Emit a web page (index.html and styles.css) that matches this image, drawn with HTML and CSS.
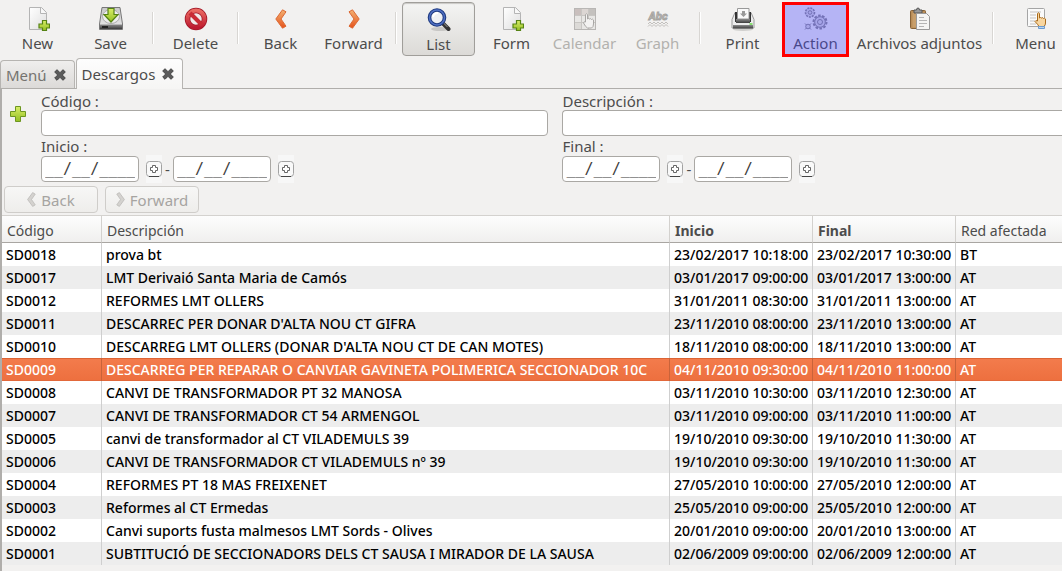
FILE: index.html
```html
<!DOCTYPE html>
<html lang="es">
<head>
<meta charset="utf-8">
<title>Descargos</title>
<link rel="stylesheet" href="styles.css">
</head>
<body>
<svg class="defs" aria-hidden="true">
  <defs>
    <linearGradient id="green" x1="0" y1="0" x2="0" y2="1"><stop offset="0" stop-color="#d9ee68"/><stop offset="1" stop-color="#94bf22"/></linearGradient>
    <linearGradient id="orange" x1="0" y1="0" x2="0" y2="1"><stop offset="0" stop-color="#f3b273"/><stop offset="1" stop-color="#e5521b"/></linearGradient>
    <linearGradient id="steel" x1="0" y1="0" x2="0" y2="1"><stop offset="0" stop-color="#c9c9c9"/><stop offset="1" stop-color="#e9e9e9"/></linearGradient>
    <linearGradient id="dark" x1="0" y1="0" x2="0" y2="1"><stop offset="0" stop-color="#8c8c8c"/><stop offset="1" stop-color="#3c3c3c"/></linearGradient>
    <linearGradient id="red" x1="0" y1="0" x2="0" y2="1"><stop offset="0" stop-color="#ea6a62"/><stop offset="1" stop-color="#bd1a30"/></linearGradient>
    <linearGradient id="paper" x1="0" y1="0" x2="1" y2="1"><stop offset="0" stop-color="#fff"/><stop offset="1" stop-color="#dedede"/></linearGradient>
    <symbol id="i-new" viewBox="0 0 24 24">
      <path d="M3.5.5h12l5 5v17h-17z" fill="url(#paper)" stroke="#b4b4b4"/>
      <path d="M14.5 1v5.500h6" fill="#f8f8f8" stroke="#b4b4b4"/>
      <path d="M16.500 13.500h4v3.500h3v4h-3v2.500h-4v-2.500h-3.500v-4h3.500z" fill="url(#green)" stroke="#568314" stroke-width="1.200"/>
    </symbol>
    <symbol id="i-plus" viewBox="0 0 16 16"><path d="M5.500.500h5v5h5v5h-5v5h-5v-5h-5v-5h5z" fill="url(#green)" stroke="#6d9620"/></symbol>
    <symbol id="i-prev" viewBox="0 0 12 20"><path d="M7.500.800L11 2.800 6 10l5 7.200-3.500 2L.800 10z" stroke-linejoin="round"/></symbol>
    <symbol id="i-next" viewBox="0 0 12 20"><path d="M4.500.800L1 2.800 6 10l-5 7.200 3.500 2L11.200 10z" stroke-linejoin="round"/></symbol>
    <symbol id="i-close" viewBox="0 0 12 12"><path d="M3 .700L6 3.700 9 .700 11.300 3 8.300 6l3 3L9 11.300l-3-3-3 3L.700 9l3-3-3-3z" fill="#5b5b5b" stroke="#444" stroke-linejoin="round"/></symbol>
    <symbol id="i-pick" viewBox="0 0 16 16">
      <rect x=".5" y=".5" width="15" height="15" rx="3" fill="#f9f9f9" stroke="#a2a2a2"/>
      <path d="M3 15.500h10" stroke="#444"/>
      <path d="M6.500 4.500h3v2h2v3h-2v2h-3v-2h-2v-3h2z" fill="#fff" stroke="#666"/>
    </symbol>
  </defs>
</svg>

<nav class="toolbar" aria-label="Acciones">
  <button class="tool"><svg class="icon"><use href="#i-new"/></svg>New</button>
  <button class="tool"><svg class="icon" viewBox="0 0 24 24"><path d="M3 .500h18L23.500 17v5.500H.500V17z" fill="url(#steel)" stroke="#777"/><ellipse cx="12" cy="9.500" rx="8.500" ry="7" fill="#eee" stroke="#aaa"/><path d="M1 17.500h22V22H1z" fill="url(#dark)"/><path d="M3 20h6" stroke="#222" stroke-width="2"/><path d="M9 1.500h6v6h4l-7 7.500-7-7.500h4z" fill="url(#green)" stroke="#568314" stroke-width="1.200"/></svg>Save</button>
  <span class="sep"></span>
  <button class="tool"><svg class="icon" viewBox="0 0 24 24"><circle cx="12" cy="12" r="8.500" fill="#f1e9e8" stroke="#a01525" stroke-width="5.500"/><circle cx="12" cy="12" r="8.500" fill="none" stroke="url(#red)" stroke-width="4"/><path d="M6 6l12 12" stroke="#c92b35" stroke-width="4"/></svg>Delete</button>
  <span class="sep"></span>
  <button class="tool"><svg class="icon chevron"><use href="#i-prev"/></svg>Back</button>
  <button class="tool"><svg class="icon chevron"><use href="#i-next"/></svg>Forward</button>
  <span class="sep"></span>
  <button class="tool pressed" aria-pressed="true"><svg class="icon" viewBox="0 0 24 24"><ellipse cx="13" cy="21" rx="9" ry="2" fill="#c8c7c5"/><path d="M15.500 15l6 6" stroke="#333" stroke-width="4" stroke-linecap="round"/><path d="M16.500 15l4 4" stroke="#999" stroke-width="1"/><circle cx="10" cy="9.500" r="7.500" fill="#eef0f4" stroke="#1f3a80" stroke-width="3.600"/><circle cx="10" cy="9.500" r="7.500" fill="none" stroke="#4f70c4" stroke-width="1.500"/><path d="M6 9a5 5 0 0 1 5-4" fill="none" stroke="#fff" stroke-width="2"/></svg>List</button>
  <button class="tool"><svg class="icon"><use href="#i-new"/></svg>Form</button>
  <button class="tool" disabled><svg class="icon" viewBox="0 0 24 24"><rect x="1.500" y="1.500" width="21" height="21" fill="#e8e7e5" stroke="#b8b6b4"/><path d="M2 2h6v6H2z" fill="#c9bfbd"/><path d="M8 2h7v6H8z" fill="#dcd6d3"/><path d="M15 2h7v6h-7z" fill="#c4c1be"/><path d="M2 15h6v7H2z" fill="#dcdad7"/><path d="M8.500 2v20M15.500 2v20M2 8.500h20M2 15.500h20" stroke="#c8c6c3"/><path d="M12.500 14V7.500q1-1.500 2 0V12q1-1 2 0 1-1 2 .500 1-1 2 .500V17q0 3-2 4h-4q-2-1-4-5 .500-2 2-1z" fill="#f3f2f1" stroke="#a9a7a5"/></svg>Calendar</button>
  <button class="tool" disabled><svg class="icon" viewBox="0 0 24 24"><text x="12" y="13" text-anchor="middle" class="abc">Abc</text><path d="M2 17l2-2 2 2 2-2 2 2 2-2 2 2 2-2 2 2 2-2 2 2M2 19.500l2-2 2 2 2-2 2 2 2-2 2 2 2-2 2 2 2-2 2 2" fill="none" stroke="#c2c0bd"/></svg>Graph</button>
  <span class="sep"></span>
  <button class="tool"><svg class="icon" viewBox="0 0 24 24"><ellipse cx="12" cy="22.500" rx="10" ry="1.500" fill="#d0cfcd"/><path d="M4 5.500h16l3 7v8.500H1v-8.500z" fill="#ececec" stroke="#999"/><path d="M4 5h16v10H4z" fill="#333"/><path d="M6.500 1.500h11.500V12H6.500z" fill="#fafafa" stroke="#999"/><path d="M11 4h3v2.500h2L12.500 10 9 6.500h2z" fill="#999"/><path d="M5 12h14v4H5z" fill="url(#dark)"/><path d="M2 18h20v3.500H2z" fill="url(#dark)"/><path d="M18.500 17h3" stroke="#64d84a" stroke-width="1.500"/></svg>Print</button>
  <button class="tool marked"><svg class="icon" viewBox="0 0 24 24"><g fill="#dad9dc" stroke="#8c8b90"><circle cx="6" cy="5.500" r="4.500" stroke-width="1.600" stroke-dasharray="2 1"/><circle cx="6" cy="5.500" r="1.800"/><circle cx="16" cy="15" r="6.500" stroke-width="2" stroke-dasharray="2.500 1.500"/><circle cx="16" cy="15" r="5.300"/><circle cx="16" cy="15" r="2.500"/><circle cx="4" cy="19.500" r="2.300"/><path d="M1 16.500l1.500 1.500M7 16.500l-1.500 1.500M1 22.500L2.500 21M7 22.500L5.500 21"/></g></svg>Action</button>
  <button class="tool wide"><svg class="icon" viewBox="0 0 24 24"><rect x="2.500" y="3.500" width="15" height="18" rx="1" fill="#b98d58" stroke="#876237"/><path d="M4.500 5.500h11v15h-11z" fill="#c89f6b"/><path d="M6 6V3h2.500q0-2 1.500-2t1.500 2H14v3z" fill="#999" stroke="#555"/><path d="M8.500 6.500h10l3 3v13h-13z" fill="#f5f5f4" stroke="#999"/><path d="M11 10.500h5M11 13.500h8M11 16.500h8M11 19.500h5" stroke="#b5b5b5"/></svg>Archivos adjuntos</button>
  <span class="sep"></span>
  <button class="tool"><svg class="icon" viewBox="0 0 24 24"><rect x="3.500" y="1.500" width="17" height="18" rx="1" fill="#fafafa" stroke="#a5a5a5"/><path d="M6 5h11M6 8h6M6 11h6M6 14h5M6 17h6" stroke="#c3c3c3"/><path d="M13.500 14V6.500q1-1.500 2 0V11q1-1 2 0 1-1 2 .500 1-1 2 .500V16q0 2-1.500 3.500h-5q-1-2-4-5 .500-1.500 2.500-.500z" fill="#f8d6a0" stroke="#a86a1c"/><path d="M14.500 19.500h6v2h-6z" fill="#b9d4f0" stroke="#6b9bd0"/></svg>Menu</button>
</nav>

<div class="tabs" role="tablist">
  <div class="tab" role="tab">Menú<button class="close" aria-label="Cerrar Menú"><svg><use href="#i-close"/></svg></button></div>
  <div class="tab active" role="tab" aria-selected="true">Descargos<button class="close" aria-label="Cerrar Descargos"><svg><use href="#i-close"/></svg></button></div>
</div>

<main class="page">
  <form class="search">
    <button class="add" type="button" aria-label="Añadir filtro"><svg><use href="#i-plus"/></svg></button>
    <div class="fields">
      <label for="codigo">Código :</label>
      <input class="text" id="codigo" type="text">
      <label for="inicio">Inicio :</label>
      <div class="range">
        <input class="date" id="inicio" type="text" value="__/__/____">
        <button class="pick" type="button" aria-label="Elegir fecha"><svg><use href="#i-pick"/></svg></button>
        <span class="dash">-</span>
        <input class="date" type="text" value="__/__/____" aria-label="Inicio hasta">
        <button class="pick" type="button" aria-label="Elegir fecha"><svg><use href="#i-pick"/></svg></button>
      </div>
    </div>
    <div class="fields">
      <label for="descripcion">Descripción :</label>
      <input class="text open" id="descripcion" type="text">
      <label for="final">Final :</label>
      <div class="range">
        <input class="date" id="final" type="text" value="__/__/____">
        <button class="pick" type="button" aria-label="Elegir fecha"><svg><use href="#i-pick"/></svg></button>
        <span class="dash">-</span>
        <input class="date" type="text" value="__/__/____" aria-label="Final hasta">
        <button class="pick" type="button" aria-label="Elegir fecha"><svg><use href="#i-pick"/></svg></button>
      </div>
    </div>
  </form>

  <div class="pager">
    <button disabled><svg class="arrow"><use href="#i-prev"/></svg>Back</button>
    <button disabled><svg class="arrow"><use href="#i-next"/></svg>Forward</button>
  </div>

  <table class="list">
    <colgroup><col class="c-code"><col class="c-desc"><col class="c-date"><col class="c-date"><col></colgroup>
    <thead><tr><th>Código</th><th>Descripción</th><th class="strong">Inicio</th><th class="strong">Final</th><th>Red afectada</th></tr></thead>
    <tbody>
      <tr><td>SD0018</td><td>prova bt</td><td>23/02/2017 10:18:00</td><td>23/02/2017 10:30:00</td><td>BT</td></tr>
      <tr><td>SD0017</td><td>LMT Derivaió Santa Maria de Camós</td><td>03/01/2017 09:00:00</td><td>03/01/2017 13:00:00</td><td>AT</td></tr>
      <tr><td>SD0012</td><td>REFORMES LMT OLLERS</td><td>31/01/2011 08:30:00</td><td>31/01/2011 13:00:00</td><td>AT</td></tr>
      <tr><td>SD0011</td><td>DESCARREC PER DONAR D'ALTA NOU CT GIFRA</td><td>23/11/2010 08:00:00</td><td>23/11/2010 13:00:00</td><td>AT</td></tr>
      <tr><td>SD0010</td><td>DESCARREG LMT OLLERS (DONAR D'ALTA NOU CT DE CAN MOTES)</td><td>18/11/2010 08:00:00</td><td>18/11/2010 13:00:00</td><td>AT</td></tr>
      <tr class="selected"><td>SD0009</td><td>DESCARREG PER REPARAR O CANVIAR GAVINETA POLIMERICA SECCIONADOR 10C</td><td>04/11/2010 09:30:00</td><td>04/11/2010 11:00:00</td><td>AT</td></tr>
      <tr><td>SD0008</td><td>CANVI DE TRANSFORMADOR PT 32 MANOSA</td><td>03/11/2010 10:30:00</td><td>03/11/2010 12:30:00</td><td>AT</td></tr>
      <tr><td>SD0007</td><td>CANVI DE TRANSFORMADOR CT 54 ARMENGOL</td><td>03/11/2010 09:00:00</td><td>03/11/2010 11:00:00</td><td>AT</td></tr>
      <tr><td>SD0005</td><td>canvi de transformador al CT VILADEMULS 39</td><td>19/10/2010 09:30:00</td><td>19/10/2010 11:30:00</td><td>AT</td></tr>
      <tr><td>SD0006</td><td>CANVI DE TRANSFORMADOR CT VILADEMULS nº 39</td><td>19/10/2010 09:30:00</td><td>19/10/2010 11:30:00</td><td>AT</td></tr>
      <tr><td>SD0004</td><td>REFORMES PT 18 MAS FREIXENET</td><td>27/05/2010 10:00:00</td><td>27/05/2010 12:00:00</td><td>AT</td></tr>
      <tr><td>SD0003</td><td>Reformes al CT Ermedas</td><td>25/05/2010 09:00:00</td><td>25/05/2010 12:00:00</td><td>AT</td></tr>
      <tr><td>SD0002</td><td>Canvi suports fusta malmesos LMT Sords - Olives</td><td>20/01/2010 09:00:00</td><td>20/01/2010 13:00:00</td><td>AT</td></tr>
      <tr><td>SD0001</td><td>SUBTITUCIÓ DE SECCIONADORS DELS CT SAUSA I MIRADOR DE LA SAUSA</td><td>02/06/2009 09:00:00</td><td>02/06/2009 12:00:00</td><td>AT</td></tr>
    </tbody>
  </table>
</main>
</body>
</html>
```

FILE: styles.css
```css
* { box-sizing: border-box; }

body {
  margin: 0;
  min-height: 100vh;
  display: flex;
  flex-direction: column;
  overflow: hidden;
  background: #f2f1f0;
  color: #4c4c4c;
  font: 15px/16px "Noto Sans", "Open Sans", sans-serif;
}

button, input { font: inherit; color: inherit; margin: 0; }
button { border: 0; padding: 0; background: none; }
.defs { display: block; width: 0; height: 0; }

/* Toolbar */
.toolbar {
  display: flex;
  flex: none;
  padding: 2px 0 2px 1px;
}
.tool {
  position: relative;
  flex: none;
  display: flex;
  flex-direction: column;
  align-items: center;
  gap: 3px;
  width: 73px;
  height: 54px;
  padding-top: 5px;
  line-height: 18px;
  white-space: nowrap;
}
.tool.wide { width: 135px; }
.tool:disabled { color: #b3b1ae; }
.icon { flex: none; width: 24px; height: 24px; }
.chevron { height: 20px; margin: 2px 0; fill: url(#orange); stroke: #dc6a35; }
.abc { font: italic bold 10px "Liberation Sans", sans-serif; fill: #d0cecb; stroke: #a5a3a0; }
.pressed {
  border: 1px solid #a09e9a;
  border-radius: 4px;
  background: linear-gradient(#f4f4f3, #dcdad7);
  box-shadow: inset 0 1px 1px #c9c8c5;
}
.marked::after {
  content: "";
  position: absolute;
  inset: 0 3px -1px;
  border: 3px solid #f00;
  background: rgba(70, 65, 255, 0.35);
}
.sep {
  flex: none;
  width: 12px;
  margin: 10px 0 12px;
  background: linear-gradient(90deg, #d8d6d3 50%, #fff 50%) center / 2px 100% no-repeat;
}

/* Tabs */
.tabs {
  display: flex;
  flex: none;
  align-items: flex-end;
  gap: 1px;
  border-bottom: 1px solid #b0aeab;
}
.tab {
  display: flex;
  align-items: center;
  gap: 7px;
  height: 28px;
  padding: 0 8px 0 5px;
  border: 1px solid #b6b4b1;
  border-bottom: 0;
  border-radius: 4px 4px 0 0;
  background: linear-gradient(#efeeed, #dcdad8);
  color: #75736f;
}
.tab.active {
  height: 31px;
  margin-bottom: -1px;
  background: linear-gradient(#fdfdfd, #f6f5f4);
  color: #4c4c4c;
}
.close svg { display: block; width: 12px; height: 12px; }

/* Notebook page */
.page {
  flex: 1;
  border-left: 2px solid #bbb9b6;
  border-image: linear-gradient(90deg, #b0aeab 50%, #fff 50%) 0 0 0 2;
}
.search {
  display: grid;
  grid-template-columns: 25px 508fr 500fr;
  column-gap: 14px;
  padding-top: 3px;
}
.add { align-self: start; margin: 14px 0 0 8px; }
.add svg { display: block; width: 16px; height: 16px; }
.fields { display: flex; flex-direction: column; min-width: 0; }
.fields label { line-height: 18px; }
.text, .date {
  border: 1px solid #aaa8a4;
  border-radius: 4px;
  background: #fff;
  height: 26px;
}
.text { width: 100%; margin-bottom: 1px; padding: 0 6px; }
.open { border-right: 0; border-radius: 4px 0 0 4px; }
.range { display: flex; align-items: center; height: 28px; }
.date {
  width: 98px;
  padding: 0 3px;
  color: #3c3c3c;
  font: 15px "DejaVu Sans Mono", monospace;
}
.pick { align-self: stretch; width: 16px; margin-left: 7px; background: #f7f7f7; }
.pick svg { display: block; width: 16px; height: 16px; margin: auto; }
.dash { width: 11px; text-align: center; }

.pager { display: flex; gap: 7px; padding: 3px 2px 2px; }
.pager button {
  display: flex;
  align-items: center;
  justify-content: center;
  gap: 5px;
  width: 94px;
  height: 27px;
  border: 1px solid #cfcdca;
  border-radius: 4px;
  background: linear-gradient(#f7f7f6, #eeedeb);
  color: #a6a4a1;
}
.arrow { width: 9px; height: 15px; fill: #d4d2cf; stroke: #bab8b5; }

/* Record list */
.list {
  width: 100%;
  table-layout: fixed;
  border-collapse: separate;
  border-spacing: 0;
  border-top: 1px solid #d4d2cf;
  background: #fff;
  color: #000;
  font-size: 14px;
}
.c-code { width: 100px; }
.c-desc { width: 568px; }
.c-date { width: 143px; }
.list th {
  height: 27px;
  padding: 4px 5px 0;
  border-right: 1px solid #d3d1ce;
  border-bottom: 1px solid #a9a6a2;
  background: linear-gradient(#fdfdfd, #f0efee);
  color: #4c4c4c;
  font-weight: normal;
  text-align: left;
}
.list .strong { font-weight: bold; }
.list td {
  height: 23px;
  padding: 0 0 0 4px;
  border-right: 1px solid #cfcfcf;
  font-weight: 500;
  white-space: nowrap;
  overflow: hidden;
}
.list th:last-child, .list td:last-child { border-right: 0; }
.list tbody tr:nth-child(even) { background: #ededed; }
.list tbody tr.selected {
  background: linear-gradient(#dc6434 1px, #f37b4c 1px, #ed703f 22px, #e2683a 22px);
  color: #fff;
}
.selected td { border-right-color: #c9633a; }
```
